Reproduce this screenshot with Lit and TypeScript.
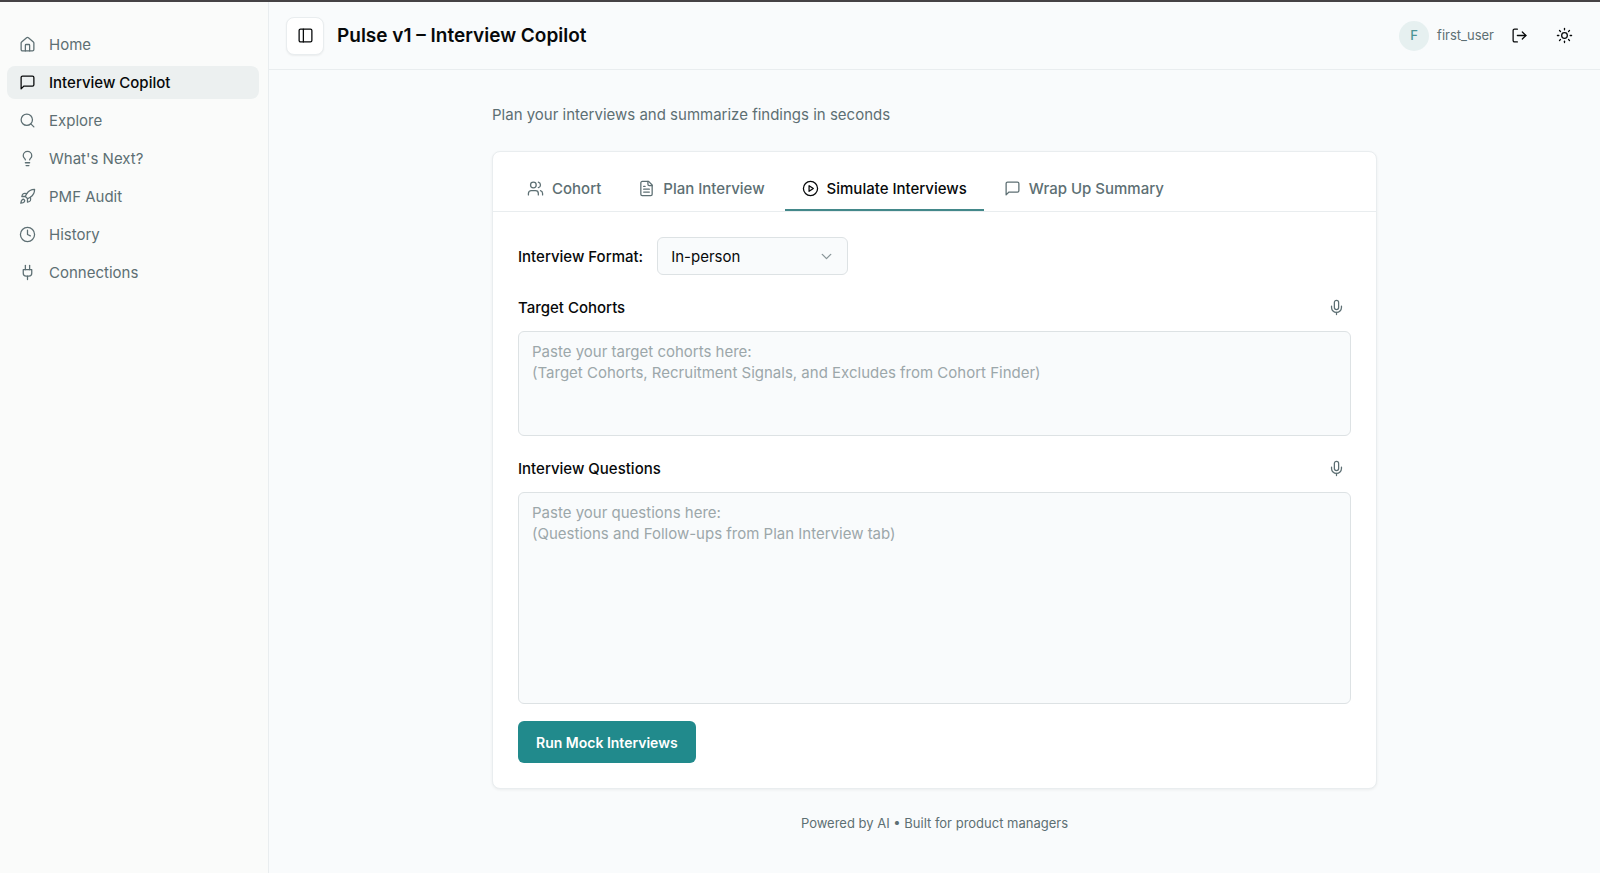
import { LitElement, html, css, svg, nothing } from "lit";
import { customElement, property, state } from "lit/decorators.js";
import { classMap } from "lit/directives/class-map.js";

const glyphs: Record<string, unknown> = {
  home: svg`<path d="M15 21v-8a1 1 0 0 0-1-1h-4a1 1 0 0 0-1 1v8"/><path d="M3 10a2 2 0 0 1 .709-1.528l7-5.999a2 2 0 0 1 2.582 0l7 5.999A2 2 0 0 1 21 10v9a2 2 0 0 1-2 2H5a2 2 0 0 1-2-2z"/>`,
  message: svg`<path d="M21 15a2 2 0 0 1-2 2H7l-4 4V5a2 2 0 0 1 2-2h14a2 2 0 0 1 2 2z"/>`,
  search: svg`<circle cx="11" cy="11" r="8"/><path d="m21 21-4.3-4.3"/>`,
  bulb: svg`<path d="M15 14c.2-1 .7-1.7 1.5-2.5 1-.9 1.5-2.2 1.5-3.5A6 6 0 0 0 6 8c0 1 .2 2.2 1.5 3.5.7.7 1.3 1.5 1.5 2.5"/><path d="M9 18h6"/><path d="M10 22h4"/>`,
  rocket: svg`<path d="M4.5 16.5c-1.5 1.26-2 5-2 5s3.74-.5 5-2c.71-.84.7-2.13-.09-2.91a2.18 2.18 0 0 0-2.91-.09z"/><path d="m12 15-3-3a22 22 0 0 1 2-3.95A12.88 12.88 0 0 1 22 2c0 2.72-.78 7.5-6 11a22.35 22.35 0 0 1-4 2z"/><path d="M9 12H4s.55-3.03 2-4c1.62-1.08 5 0 5 0"/><path d="M12 15v5s3.03-.55 4-2c1.08-1.62 0-5 0-5"/>`,
  clock: svg`<circle cx="12" cy="12" r="10"/><path d="M12 6v6l4 2"/>`,
  plug: svg`<path d="M12 22v-5"/><path d="M9 8V2"/><path d="M15 8V2"/><path d="M18 8v5a4 4 0 0 1-4 4h-4a4 4 0 0 1-4-4V8Z"/>`,
  panel: svg`<rect width="18" height="18" x="3" y="3" rx="2"/><path d="M9 3v18"/>`,
  logout: svg`<path d="M9 21H5a2 2 0 0 1-2-2V5a2 2 0 0 1 2-2h4"/><path d="m16 17 5-5-5-5"/><path d="M21 12H9"/>`,
  sun: svg`<circle cx="12" cy="12" r="4"/><path d="M12 2v2"/><path d="M12 20v2"/><path d="m4.93 4.93 1.41 1.41"/><path d="m17.66 17.66 1.41 1.41"/><path d="M2 12h2"/><path d="M20 12h2"/><path d="m6.34 17.66-1.41 1.41"/><path d="m19.07 4.93-1.41 1.41"/>`,
  users: svg`<path d="M16 21v-2a4 4 0 0 0-4-4H6a4 4 0 0 0-4 4v2"/><circle cx="9" cy="7" r="4"/><path d="M22 21v-2a4 4 0 0 0-3-3.87"/><path d="M16 3.13a4 4 0 0 1 0 7.75"/>`,
  file: svg`<path d="M15 2H6a2 2 0 0 0-2 2v16a2 2 0 0 0 2 2h12a2 2 0 0 0 2-2V7Z"/><path d="M14 2v4a2 2 0 0 0 2 2h4"/><path d="M10 9H8"/><path d="M16 13H8"/><path d="M16 17H8"/>`,
  play: svg`<circle cx="12" cy="12" r="10"/><path d="m10 8 6 4-6 4z"/>`,
  chevron: svg`<path d="m6 9 6 6 6-6"/>`,
  mic: svg`<rect x="9" y="2" width="6" height="13" rx="3"/><path d="M19 10v2a7 7 0 0 1-14 0v-2"/><path d="M12 19v3"/>`,
};

@customElement("ui-icon")
class UiIcon extends LitElement {
  @property() name = "";

  static styles = css`
    :host {
      display: block;
      flex: none;
      width: 17px;
      height: 17px;
    }
    .glyph {
      display: block;
      width: 100%;
      height: 100%;
      fill: none;
      stroke: currentColor;
      stroke-width: 1.8;
      stroke-linecap: round;
      stroke-linejoin: round;
    }
  `;

  render() {
    return html`<svg class="glyph" viewBox="0 0 24 24" aria-hidden="true">${glyphs[this.name]}</svg>`;
  }
}

const navItems = [
  { icon: "home", label: "Home" },
  { icon: "message", label: "Interview Copilot" },
  { icon: "search", label: "Explore" },
  { icon: "bulb", label: "What's Next?" },
  { icon: "rocket", label: "PMF Audit" },
  { icon: "clock", label: "History" },
  { icon: "plug", label: "Connections" },
];

const tabs = [
  { icon: "users", label: "Cohort" },
  { icon: "file", label: "Plan Interview" },
  { icon: "play", label: "Simulate Interviews" },
  { icon: "message", label: "Wrap Up Summary" },
];

@customElement("app-root")
class AppRoot extends LitElement {
  @state() private page = "Interview Copilot";
  @state() private tab = "Simulate Interviews";

  static styles = css`
    :host {
      display: block;
      --ink: #07090a;
      --muted: #5d6f73;
      --line: #e9edef;
      --field-line: #dde2e4;
      --surface: #f9fbfc;
      --teal: #218a8c;
      font-family: Inter, "Liberation Sans", sans-serif;
      font-size: 15px;
      line-height: 21px;
      color: var(--ink);
    }
    * {
      box-sizing: border-box;
    }
    button,
    select,
    textarea {
      font: inherit;
      color: inherit;
      margin: 0;
    }
    button {
      border: 0;
      background: none;
      padding: 0;
      cursor: pointer;
    }
    .shell {
      display: grid;
      grid-template-columns: 269px minmax(0, 1fr);
      min-height: 100vh;
      border-top: 2px solid #454345;
      background: var(--surface);
    }
    .sidebar {
      display: flex;
      flex-direction: column;
      gap: 5px;
      padding: 26px 9px 16px 7px;
      background: #fafbfa;
      border-right: 1px solid var(--line);
    }
    .nav-link {
      display: flex;
      align-items: center;
      gap: 13px;
      padding: 6px 12px;
      border-radius: 8px;
      color: var(--muted);
      text-decoration: none;
    }
    .nav-link.active {
      background: #ecf0f0;
      color: var(--ink);
      font-weight: 500;
    }
    .topbar {
      display: flex;
      align-items: center;
      height: 68px;
      padding: 0 18px 0 17px;
      border-bottom: 1px solid var(--line);
    }
    .toggle {
      display: grid;
      place-items: center;
      width: 38px;
      height: 38px;
      border: 1px solid var(--line);
      border-radius: 8px;
      background: #fff;
      box-shadow: 0 1px 2px rgb(0 0 0 / 6%);
    }
    .title {
      margin: 0 auto 0 13px;
      font-size: 19px;
      line-height: 28px;
      font-weight: 600;
    }
    .avatar {
      display: grid;
      place-items: center;
      width: 30px;
      height: 30px;
      border-radius: 50%;
      background: #e6f0f0;
      color: #4b9495;
      font-size: 13px;
      font-weight: 500;
    }
    .user {
      margin: 0 7px 0 8px;
      color: var(--muted);
      font-size: 13px;
    }
    .actions {
      display: flex;
      gap: 9px;
    }
    .icon-button {
      display: grid;
      place-items: center;
      width: 36px;
      height: 36px;
    }
    .content {
      max-width: 919px;
      margin: 0 auto;
      padding: 34px 17px;
    }
    .lead {
      margin: 0 0 26px;
      color: var(--muted);
    }
    .card {
      background: #fff;
      border: 1px solid var(--line);
      border-radius: 8px;
      box-shadow: 0 1px 3px rgb(0 0 0 / 6%);
    }
    .tabs {
      display: flex;
      gap: 3px;
      padding: 16px 17px 0;
      border-bottom: 1px solid var(--line);
    }
    .tab {
      display: flex;
      align-items: center;
      gap: 8px;
      padding: 10px 17px;
      border-bottom: 2px solid transparent;
      color: var(--muted);
      font-weight: 500;
    }
    .tab.active {
      border-color: #43888a;
      color: var(--ink);
    }
    .form {
      padding: 25px;
    }
    .format {
      display: flex;
      align-items: center;
      gap: 14px;
      margin-bottom: 17px;
    }
    .label {
      font-weight: 500;
    }
    .picker {
      display: grid;
      align-items: center;
      width: 191px;
    }
    .select,
    .chevron {
      grid-area: 1 / 1;
    }
    .select {
      appearance: none;
      width: 100%;
      height: 38px;
      padding: 0 40px 0 13px;
      border: 1px solid var(--field-line);
      border-radius: 6px;
      background: var(--surface);
    }
    .chevron {
      justify-self: end;
      margin-right: 13px;
      color: #899598;
      pointer-events: none;
    }
    .field-head {
      display: flex;
      align-items: center;
      justify-content: space-between;
      height: 30px;
      margin-bottom: 9px;
    }
    .mic {
      display: grid;
      place-items: center;
      width: 30px;
      height: 30px;
      color: var(--muted);
    }
    .area {
      display: block;
      width: 100%;
      margin-bottom: 17px;
      padding: 9px 13px;
      border: 1px solid var(--field-line);
      border-radius: 6px;
      background: var(--surface);
      resize: none;
    }
    .area::placeholder {
      color: #9ca7aa;
      opacity: 1;
    }
    .area.short {
      height: 105px;
    }
    .area.tall {
      height: 212px;
    }
    .run {
      height: 42px;
      padding: 0 18px;
      border-radius: 6px;
      background: var(--teal);
      color: #fff;
      font-size: 14px;
      font-weight: 600;
    }
    .footer {
      margin: 24px 0 0;
      text-align: center;
      color: var(--muted);
      font-size: 13px;
    }
  `;

  private field(id: string, label: string, size: string, hint: string) {
    return html`
      <div class="field-head">
        <label class="label" for=${id}>${label}</label>
        <button class="mic" type="button" aria-label=${`Dictate ${label}`}>
          <ui-icon name="mic"></ui-icon>
        </button>
      </div>
      <textarea class="area ${size}" id=${id} .placeholder=${hint}></textarea>
    `;
  }

  render() {
    return html`
      <div class="shell">
        <nav class="sidebar" aria-label="Main">
          ${navItems.map(
            ({ icon, label }) => html`<a
              class=${classMap({ "nav-link": true, active: label === this.page })}
              href="#"
              aria-current=${label === this.page ? "page" : nothing}
              @click=${(e: Event) => {
                e.preventDefault();
                this.page = label;
              }}
              ><ui-icon name=${icon}></ui-icon>${label}</a
            >`
          )}
        </nav>
        <div>
          <header class="topbar">
            <button class="toggle" type="button" aria-label="Toggle sidebar">
              <ui-icon name="panel"></ui-icon>
            </button>
            <h1 class="title">Pulse v1 – Interview Copilot</h1>
            <span class="avatar" aria-hidden="true">F</span>
            <span class="user">first_user</span>
            <div class="actions">
              <button class="icon-button" type="button" aria-label="Log out">
                <ui-icon name="logout"></ui-icon>
              </button>
              <button class="icon-button" type="button" aria-label="Switch theme">
                <ui-icon name="sun"></ui-icon>
              </button>
            </div>
          </header>
          <main class="content">
            <p class="lead">Plan your interviews and summarize findings in seconds</p>
            <section class="card">
              <div class="tabs" role="tablist">
                ${tabs.map(
                  ({ icon, label }) => html`<button
                    class=${classMap({ tab: true, active: label === this.tab })}
                    type="button"
                    role="tab"
                    aria-selected=${label === this.tab ? "true" : "false"}
                    @click=${() => (this.tab = label)}
                  >
                    <ui-icon name=${icon}></ui-icon>${label}
                  </button>`
                )}
              </div>
              <form class="form" @submit=${(e: Event) => e.preventDefault()}>
                <div class="format">
                  <label class="label" for="format">Interview Format:</label>
                  <div class="picker">
                    <select class="select" id="format">
                      <option>In-person</option>
                    </select>
                    <ui-icon class="chevron" name="chevron"></ui-icon>
                  </div>
                </div>
                ${this.field(
                  "cohorts",
                  "Target Cohorts",
                  "short",
                  "Paste your target cohorts here:\n(Target Cohorts, Recruitment Signals, and Excludes from Cohort Finder)"
                )}
                ${this.field(
                  "questions",
                  "Interview Questions",
                  "tall",
                  "Paste your questions here:\n(Questions and Follow-ups from Plan Interview tab)"
                )}
                <button class="run" type="submit">Run Mock Interviews</button>
              </form>
            </section>
            <p class="footer">Powered by AI • Built for product managers</p>
          </main>
        </div>
      </div>
    `;
  }
}
